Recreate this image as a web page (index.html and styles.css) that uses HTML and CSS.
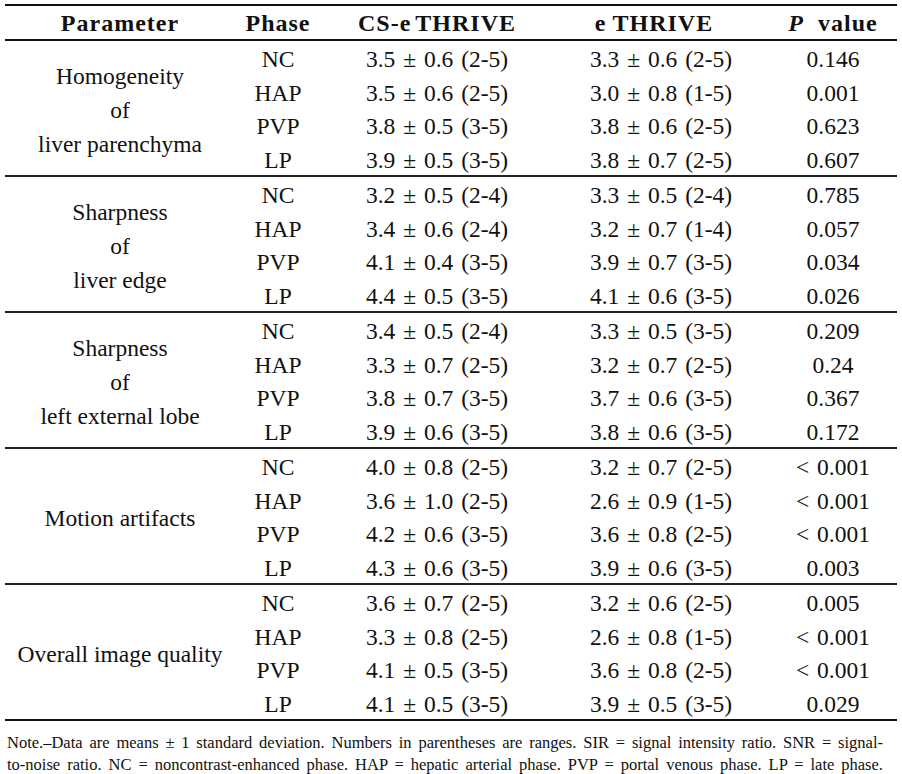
FILE: index.html
```html
<!DOCTYPE html>
<html>
<head>
<meta charset="utf-8">
<link rel="stylesheet" href="styles.css">
</head>
<body>
<div class="page">
  <div class="table">
    <div class="row head">
      <div class="cell">Parameter</div>
      <div class="cell">Phase</div>
      <div class="cell">CS-<span class="gap">e</span>THRIVE</div>
      <div class="cell ecol"><span class="gap">e</span>THRIVE</div>
      <div class="cell"><i>P</i>&nbsp;&nbsp;value</div>
    </div>

    <div class="group">
      <div class="param"><span>Homogeneity</span><span>of</span><span>liver parenchyma</span></div>
      <div class="rows">
        <div class="row"><div class="cell">NC</div><div class="cell">3.5 ± 0.6 (2-5)</div><div class="cell">3.3 ± 0.6 (2-5)</div><div class="cell">0.146</div></div>
        <div class="row"><div class="cell">HAP</div><div class="cell">3.5 ± 0.6 (2-5)</div><div class="cell">3.0 ± 0.8 (1-5)</div><div class="cell">0.001</div></div>
        <div class="row"><div class="cell">PVP</div><div class="cell">3.8 ± 0.5 (3-5)</div><div class="cell">3.8 ± 0.6 (2-5)</div><div class="cell">0.623</div></div>
        <div class="row"><div class="cell">LP</div><div class="cell">3.9 ± 0.5 (3-5)</div><div class="cell">3.8 ± 0.7 (2-5)</div><div class="cell">0.607</div></div>
      </div>
    </div>

    <div class="group">
      <div class="param"><span>Sharpness</span><span>of</span><span>liver edge</span></div>
      <div class="rows">
        <div class="row"><div class="cell">NC</div><div class="cell">3.2 ± 0.5 (2-4)</div><div class="cell">3.3 ± 0.5 (2-4)</div><div class="cell">0.785</div></div>
        <div class="row"><div class="cell">HAP</div><div class="cell">3.4 ± 0.6 (2-4)</div><div class="cell">3.2 ± 0.7 (1-4)</div><div class="cell">0.057</div></div>
        <div class="row"><div class="cell">PVP</div><div class="cell">4.1 ± 0.4 (3-5)</div><div class="cell">3.9 ± 0.7 (3-5)</div><div class="cell">0.034</div></div>
        <div class="row"><div class="cell">LP</div><div class="cell">4.4 ± 0.5 (3-5)</div><div class="cell">4.1 ± 0.6 (3-5)</div><div class="cell">0.026</div></div>
      </div>
    </div>

    <div class="group">
      <div class="param"><span>Sharpness</span><span>of</span><span>left external lobe</span></div>
      <div class="rows">
        <div class="row"><div class="cell">NC</div><div class="cell">3.4 ± 0.5 (2-4)</div><div class="cell">3.3 ± 0.5 (3-5)</div><div class="cell">0.209</div></div>
        <div class="row"><div class="cell">HAP</div><div class="cell">3.3 ± 0.7 (2-5)</div><div class="cell">3.2 ± 0.7 (2-5)</div><div class="cell">0.24</div></div>
        <div class="row"><div class="cell">PVP</div><div class="cell">3.8 ± 0.7 (3-5)</div><div class="cell">3.7 ± 0.6 (3-5)</div><div class="cell">0.367</div></div>
        <div class="row"><div class="cell">LP</div><div class="cell">3.9 ± 0.6 (3-5)</div><div class="cell">3.8 ± 0.6 (3-5)</div><div class="cell">0.172</div></div>
      </div>
    </div>

    <div class="group">
      <div class="param"><span>Motion artifacts</span></div>
      <div class="rows">
        <div class="row"><div class="cell">NC</div><div class="cell">4.0 ± 0.8 (2-5)</div><div class="cell">3.2 ± 0.7 (2-5)</div><div class="cell">&lt; 0.001</div></div>
        <div class="row"><div class="cell">HAP</div><div class="cell">3.6 ± 1.0 (2-5)</div><div class="cell">2.6 ± 0.9 (1-5)</div><div class="cell">&lt; 0.001</div></div>
        <div class="row"><div class="cell">PVP</div><div class="cell">4.2 ± 0.6 (3-5)</div><div class="cell">3.6 ± 0.8 (2-5)</div><div class="cell">&lt; 0.001</div></div>
        <div class="row"><div class="cell">LP</div><div class="cell">4.3 ± 0.6 (3-5)</div><div class="cell">3.9 ± 0.6 (3-5)</div><div class="cell">0.003</div></div>
      </div>
    </div>

    <div class="group last">
      <div class="param"><span>Overall image quality</span></div>
      <div class="rows">
        <div class="row"><div class="cell">NC</div><div class="cell">3.6 ± 0.7 (2-5)</div><div class="cell">3.2 ± 0.6 (2-5)</div><div class="cell">0.005</div></div>
        <div class="row"><div class="cell">HAP</div><div class="cell">3.3 ± 0.8 (2-5)</div><div class="cell">2.6 ± 0.8 (1-5)</div><div class="cell">&lt; 0.001</div></div>
        <div class="row"><div class="cell">PVP</div><div class="cell">4.1 ± 0.5 (3-5)</div><div class="cell">3.6 ± 0.8 (2-5)</div><div class="cell">&lt; 0.001</div></div>
        <div class="row"><div class="cell">LP</div><div class="cell">4.1 ± 0.5 (3-5)</div><div class="cell">3.9 ± 0.5 (3-5)</div><div class="cell">0.029</div></div>
      </div>
    </div>
  </div>

  <p class="note">Note.–Data are means ± 1 standard deviation. Numbers in parentheses are ranges. SIR = signal intensity ratio. SNR = signal-<br>to-noise ratio. NC = noncontrast-enhanced phase. HAP = hepatic arterial phase. PVP = portal venous phase. LP = late phase.</p>
</div>
</body>
</html>
```

FILE: styles.css
```css
html, body {
  margin: 0;
  padding: 0;
  background: #ffffff;
}

body {
  font-family: "Liberation Serif", Tinos, "Times New Roman", Times, serif;
  color: #111111;
}

.page {
  width: 892px;
  padding: 4px 5px 0 5px;
}

.table {
  border-top: 2px solid #111111;
  border-bottom: 2px solid #111111;
}

.row {
  display: grid;
  grid-template-columns: 86px 232px 216px 128px;
  height: 34px;
  align-items: center;
  font-size: 23.5px;
  word-spacing: 2px;
}

.row.head {
  grid-template-columns: 230px 86px 232px 216px 128px;
  height: 33px;
  font-weight: bold;
  font-size: 24px;
  letter-spacing: 1px;
  word-spacing: 0;
  border-bottom: 2px solid #111111;
}

.cell {
  text-align: center;
  white-space: nowrap;
}

.row .cell {
  padding-top: 4px;
}

.row.head .cell {
  padding-top: 1px;
}

.gap {
  margin-right: 4px;
}

.row.head .ecol {
  padding-right: 14px;
}

.ecol .gap {
  margin-right: 6px;
}

.group {
  display: grid;
  grid-template-columns: 230px 662px;
  border-bottom: 2px solid #222222;
}

.group.last {
  border-bottom: none;
}

.rows {
  display: flex;
  flex-direction: column;
}

.group .row {
  height: 33.5px;
}

.param {
  display: flex;
  flex-direction: column;
  justify-content: center;
  align-items: center;
  font-size: 23.5px;
  line-height: 34px;
  padding-top: 4px;
}

.note {
  margin: 11px 0 0 2px;
  width: 876px;
  font-size: 16.5px;
  line-height: 21.5px;
  text-align: justify;
  text-align-last: justify;
}
```
